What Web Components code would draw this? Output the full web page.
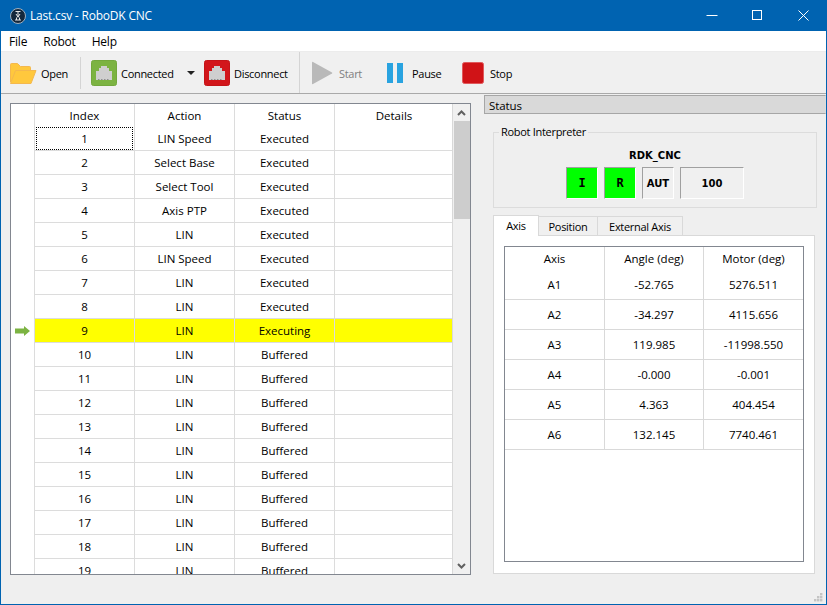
<!DOCTYPE html>
<html>
<head>
<meta charset="utf-8">
<title>Last.csv - RoboDK CNC</title>
<style>
  html, body { margin: 0; padding: 0; background: #efefef; }
  body { font: 11.5px "Open Sans", "Liberation Sans", sans-serif; color: #000; }
</style>
</head>
<body>
<cnc-window>
  <title-bar slot="title" label="Last.csv - RoboDK CNC"></title-bar>
  <menu-bar slot="menu"></menu-bar>
  <tool-bar slot="tools"></tool-bar>
  <program-table slot="left"></program-table>
  <status-dock slot="right"></status-dock>
</cnc-window>

<script>
class CncWindow extends HTMLElement {
  constructor() {
    super();
    this.attachShadow({ mode: 'open' });
    this.shadowRoot.innerHTML = `
      <style>
        :host {
          display: flex;
          flex-direction: column;
          box-sizing: border-box;
          width: 827px;
          height: 605px;
          border: 1px solid #0063b1;
          border-top: 0;
          background: #efefef;
          overflow: hidden;
          position: relative;
        }
        .main { flex: 1; display: flex; min-height: 0; }
        .grip { position: absolute; right: 3px; bottom: 2px; width: 9px; height: 9px; }
      </style>
      <slot name="title"></slot>
      <slot name="menu"></slot>
      <slot name="tools"></slot>
      <div class="main">
        <slot name="left"></slot>
        <slot name="right"></slot>
      </div>
      <svg class="grip" viewBox="0 0 9 9" fill="#c4c4c4">
        <rect x="6" y="0" width="2.4" height="2.4"/>
        <rect x="3" y="3" width="2.4" height="2.4"/><rect x="6" y="3" width="2.4" height="2.4"/>
        <rect x="0" y="6" width="2.4" height="2.4"/><rect x="3" y="6" width="2.4" height="2.4"/><rect x="6" y="6" width="2.4" height="2.4"/>
      </svg>
    `;
  }
}
customElements.define('cnc-window', CncWindow);

class TitleBar extends HTMLElement {
  constructor() {
    super();
    this.attachShadow({ mode: 'open' });
  }
  connectedCallback() {
    this.shadowRoot.innerHTML = `
      <style>
        :host {
          display: flex;
          align-items: center;
          height: 31px;
          margin: 0 -1px;
          padding-left: 10px;
          background: #0063b1;
          color: #fff;
          font-size: 12px;
          letter-spacing: -0.2px;
        }
        .logo { width: 16px; height: 16px; margin-right: 4px; flex: none; }
        .label { flex: 1; }
        .ctrl { display: block; flex: none; width: 46px; height: 31px; }
      </style>
      <svg class="logo" viewBox="0 0 16 16">
        <circle cx="8" cy="8" r="7.5" fill="#14283c" stroke="#9fb0bf" stroke-width="1"/>
        <path d="M5.500 3.500h5M8 3.500v6M6 6l2 3 2-3M5 12h6M6.500 9.500v2.500M9.500 9.500v2.500" stroke="#e6e6e6" stroke-width="1" fill="none"/>
      </svg>
      <span class="label">${this.getAttribute('label')}</span>
      <svg class="ctrl" viewBox="0 0 46 31"><path d="M17.500 15.500h11" stroke="#fff" fill="none"/></svg>
      <svg class="ctrl" viewBox="0 0 46 31"><rect x="17.500" y="10.500" width="9" height="9" stroke="#fff" fill="none"/></svg>
      <svg class="ctrl" viewBox="0 0 46 31"><path d="M17.500 10.500l10 10M27.500 10.500l-10 10" stroke="#fff" fill="none"/></svg>
    `;
  }
}
customElements.define('title-bar', TitleBar);

class MenuBar extends HTMLElement {
  constructor() {
    super();
    this.attachShadow({ mode: 'open' });
    this.shadowRoot.innerHTML = `
      <style>
        :host {
          display: flex;
          height: 20px;
          align-items: center;
          gap: 16px;
          padding-left: 8px;
          background: #fff;
          font-size: 12px;
          letter-spacing: -0.2px;
          border-bottom: 1px solid #ececec;
        }
      </style>
      <span>File</span><span>Robot</span><span>Help</span>
    `;
  }
}
customElements.define('menu-bar', MenuBar);

function plugIcon(fill, edge) {
  return `<svg width="26" height="26" viewBox="0 0 26 26">
      <rect x=".5" y=".5" width="25" height="25" rx="2" fill="${fill}" stroke="${edge}"/>
      <path d="M5 20V11H8V8H10V6H16V8H18V11H21V20Z" fill="#cfcfcf"/>
      <path d="M7 19.500h1.500M10 19.500h1.500M13 19.500h1.500M16 19.500h1.500" stroke="#8f8f8f" fill="none"/>
    </svg>`;
}

const ICONS = {
  open: `<svg width="28" height="24" viewBox="0 0 28 24">
      <path d="M1.500 21V3.500q0-1 1-1h6l3 3h9q1 0 1 1V9" fill="#ffc83d" stroke="#f4b84e"/>
      <path d="M1.500 22.500L6.500 9.500h20.500L22 22.500z" fill="#ffc83d" stroke="#f4b84e" stroke-linejoin="round"/>
    </svg>`,
  plugGreen: plugIcon('#7cb342', '#73a83d'),
  plugRed: plugIcon('#d2161b', '#c41418'),
  start: `<svg width="22" height="24" viewBox="0 0 22 24"><path d="M0 1.500v21q0 1 1 .5L20 12.500q.8-.5 0-1L1 1q-1-.5-1 .5z" fill="#b9b9b9"/></svg>`,
  pause: `<svg width="16" height="20" viewBox="0 0 16 20"><rect x="0" y="0" width="6" height="20" fill="#29a3e0"/><rect x="10" y="0" width="6" height="20" fill="#29a3e0"/></svg>`,
  stop: `<svg width="22" height="22" viewBox="0 0 22 22"><rect x=".5" y=".5" width="21" height="21" rx="2" fill="#d01317" stroke="#e0595c"/></svg>`
};

class ToolButton extends HTMLElement {
  constructor() {
    super();
    this.attachShadow({ mode: 'open' });
  }
  connectedCallback() {
    const disabled = this.hasAttribute('disabled');
    this.shadowRoot.innerHTML = `
      <style>
        :host {
          display: flex;
          flex: none;
          align-items: center;
          gap: var(--gap, 4px);
          font-size: 11px;
          letter-spacing: -0.3px;
          white-space: nowrap;
          color: ${disabled ? '#808080' : '#000'};
        }
        svg { display: block; flex: none; }
      </style>
      ${ICONS[this.getAttribute('icon')]}
      <span><slot></slot></span>
    `;
  }
}
customElements.define('tool-button', ToolButton);

class ToolBar extends HTMLElement {
  constructor() {
    super();
    this.attachShadow({ mode: 'open' });
    this.shadowRoot.innerHTML = `
      <style>
        :host {
          display: flex;
          align-items: center;
          box-sizing: border-box;
          height: 42px;
          padding: 1px 0 0 8px;
          background: #f0f0f0;
          border-bottom: 1px solid #a9a9a9;
        }
        .sep { width: 1px; background: #d4d4d4; flex: none; }
        .arrow { width: 0; height: 0; flex: none; border: 4px solid transparent; border-top: 4px solid #222; border-bottom: 0; }
      </style>
      <tool-button icon="open" style="width:57px">Open</tool-button>
      <div class="sep" style="height:32px;margin:-1px 10px 0 14px"></div>
      <tool-button icon="plugGreen" style="width:82px">Connected</tool-button>
      <div class="arrow" style="margin:0 9px 0 14px"></div>
      <tool-button icon="plugRed" style="width:83px">Disconnect</tool-button>
      <div class="sep" style="height:41px;margin:-1px 12px 0 12px"></div>
      <tool-button icon="start" style="--gap:5px;width:52px" disabled>Start</tool-button>
      <tool-button icon="pause" style="--gap:9px;width:54px;margin-left:23px">Pause</tool-button>
      <tool-button icon="stop" style="--gap:6px;margin-left:21px">Stop</tool-button>
    `;
  }
}
customElements.define('tool-bar', ToolBar);

class ProgramTable extends HTMLElement {
  constructor() {
    super();
    this.attachShadow({ mode: 'open' });
  }
  connectedCallback() {
    const actions = ['LIN Speed', 'Select Base', 'Select Tool', 'Axis PTP', 'LIN', 'LIN Speed'];
    let rows = '';
    for (let i = 1; i <= 19; i++) {
      const status = i < 9 ? 'Executed' : i === 9 ? 'Executing' : 'Buffered';
      const action = actions[i - 1] || 'LIN';
      rows += `
        <div class="row ${i === 9 ? 'current' : ''}">
          <div class="rh">${i === 9 ? '<svg width="15" height="10" viewBox="0 0 15 10"><path d="M0 2.500H9V0L15 5 9 10V7.500H0Z" fill="#7cb342"/></svg>' : ''}</div>
          <div class="c"><span class="${i === 1 ? 'focus' : ''}">${i}</span></div>
          <div class="c">${action}</div>
          <div class="c">${status}</div>
          <div class="c"></div>
        </div>`;
    }
    this.shadowRoot.innerHTML = `
      <style>
        :host {
          display: flex;
          box-sizing: border-box;
          flex: none;
          width: 461px;
          height: 472px;
          margin: 9px 13px 0 9px;
          border: 1px solid #828790;
          background: #fff;
          font-size: 11.5px;
        }
        .body { flex: none; width: 441px; height: 470px; overflow: hidden; border-right: 1px solid #d9d9d9; }
        .row { display: grid; grid-template-columns: 24px 100px 100px 100px 118px; height: 24px; }
        .head { height: 23px; }
        .rh { border-right: 1px solid #dcdcdc; box-sizing: border-box; display: flex; align-items: center; padding-left: 4px; }
        .c {
          box-sizing: border-box;
          display: flex;
          align-items: center;
          justify-content: center;
          border-right: 1px solid #dcdcdc;
          border-bottom: 1px solid #dcdcdc;
          position: relative;
        }
        .c:last-child { border-right: 0; }
        .head .c { border-bottom: 0; }
        .current .c { background: #ff0; }
        .focus::before {
          content: '';
          position: absolute;
          left: 1px; top: 0; right: 1px; bottom: 0;
          border: 1px dotted #000;
        }
        .scroll { flex: 1; display: flex; flex-direction: column; background: #f0f0f0; }
        .btn { height: 17px; display: flex; align-items: center; justify-content: center; flex: none; }
        .thumb { height: 98px; background: #cdcdcd; margin-left: 1px; flex: none; }
        .track { flex: 1; }
      </style>
      <div class="body">
        <div class="row head">
          <div class="rh"></div>
          <div class="c">Index</div><div class="c">Action</div><div class="c">Status</div><div class="c">Details</div>
        </div>
        ${rows}
      </div>
      <div class="scroll">
        <div class="btn"><svg width="9" height="6" viewBox="0 0 9 6"><path d="M1 5l3.500-3.500L8 5" fill="none" stroke="#606060" stroke-width="2"/></svg></div>
        <div class="thumb"></div>
        <div class="track"></div>
        <div class="btn"><svg width="9" height="6" viewBox="0 0 9 6"><path d="M1 1l3.500 3.500L8 1" fill="none" stroke="#606060" stroke-width="2"/></svg></div>
      </div>
    `;
  }
}
customElements.define('program-table', ProgramTable);

class StateBox extends HTMLElement {
  constructor() {
    super();
    this.attachShadow({ mode: 'open' });
    this.shadowRoot.innerHTML = `
      <style>
        :host {
          display: flex;
          align-items: center;
          justify-content: center;
          box-sizing: border-box;
          width: var(--w, 32px);
          height: 32px;
          border: 1px solid;
          border-color: #a0a0a0 #fff #fff #a0a0a0;
          background: var(--bg, #f0f0f0);
          font: bold 10px "DejaVu Sans", sans-serif;
          color: #000;
        }
      </style>
      <slot></slot>
    `;
  }
}
customElements.define('state-box', StateBox);

class AxisTable extends HTMLElement {
  constructor() {
    super();
    this.attachShadow({ mode: 'open' });
  }
  connectedCallback() {
    const data = [
      ['A1', '-52.765', '5276.511'],
      ['A2', '-34.297', '4115.656'],
      ['A3', '119.985', '-11998.550'],
      ['A4', '-0.000', '-0.001'],
      ['A5', '4.363', '404.454'],
      ['A6', '132.145', '7740.461']
    ];
    this.shadowRoot.innerHTML = `
      <style>
        :host {
          display: block;
          box-sizing: border-box;
          height: 316px;
          border: 1px solid #828790;
          background: #fff;
          font-size: 11.5px;
        }
        .row { display: grid; grid-template-columns: 100px 99px 99px; height: 30px; }
        .row.head { height: 23px; }
        .c {
          display: flex;
          align-items: center;
          justify-content: center;
          box-sizing: border-box;
          border-right: 1px solid #d9d9d9;
          border-bottom: 1px solid #d9d9d9;
        }
        .c:last-child { border-right: 0; }
        .head .c { border-bottom: 0; }
      </style>
      <div class="row head"><div class="c">Axis</div><div class="c">Angle (deg)</div><div class="c">Motor (deg)</div></div>
      ${data.map(r => `<div class="row">${r.map(v => `<div class="c">${v}</div>`).join('')}</div>`).join('')}
    `;
  }
}
customElements.define('axis-table', AxisTable);

class StatusDock extends HTMLElement {
  constructor() {
    super();
    this.attachShadow({ mode: 'open' });
    this.shadowRoot.innerHTML = `
      <style>
        :host {
          display: flex;
          flex-direction: column;
          flex: none;
          width: 342px;
          margin-top: 1px;
          font-size: 11.5px;
        }
        .title {
          box-sizing: border-box;
          height: 19px;
          display: flex;
          align-items: center;
          padding: 1px 0 0 4px;
          background: #d9d9d9;
          border: 1px solid #a6a6a6;
          border-right-color: #dcdcdc;
          letter-spacing: -0.1px;
        }
        fieldset {
          box-sizing: border-box;
          margin: 10px 9px 0;
          padding: 0;
          height: 84px;
          border: 1px solid #dcdcdc;
          display: flex;
          flex-direction: column;
          align-items: center;
          min-width: 0;
        }
        legend { padding: 0 2px; margin-left: 5px; font-size: 11px; letter-spacing: -0.3px; line-height: 16px; }
        .name { font: bold 10px "DejaVu Sans", sans-serif; margin: 9px 0 5px; line-height: 13px; }
        .boxes { display: flex; gap: 6px; }
        .tabs { display: flex; margin: 6px 9px 0; height: 21px; align-items: flex-end; font-size: 11px; letter-spacing: -0.3px; }
        .tab {
          box-sizing: border-box;
          height: 19px;
          display: flex;
          align-items: center;
          justify-content: center;
          background: #f0f0f0;
          border: 1px solid #d9d9d9;
          border-left: 0;
          border-bottom: 0;
        }
        .tab.on { height: 21px; width: 46px; background: #fff; border-left: 1px solid #d9d9d9; padding-bottom: 1px; margin-bottom: -1px; position: relative; z-index: 1; }
        .panel {
          box-sizing: border-box;
          margin: 0 11px 0 9px;
          height: 339px;
          padding: 10px;
          background: #fff;
          border: 1px solid #d9d9d9;
        }
      </style>
      <div class="title">Status</div>
      <fieldset>
        <legend>Robot Interpreter</legend>
        <div class="name">RDK_CNC</div>
        <div class="boxes">
          <state-box style="--bg:#00ff00;font-family:'DejaVu Sans Mono',monospace;font-size:12px">I</state-box>
          <state-box style="--bg:#00ff00;font-family:'DejaVu Sans Mono',monospace;font-size:12px">R</state-box>
          <state-box>AUT</state-box>
          <state-box style="--w:64px">100</state-box>
        </div>
      </fieldset>
      <div class="tabs">
        <div class="tab on">Axis</div>
        <div class="tab" style="width:59px">Position</div>
        <div class="tab" style="width:85px">External Axis</div>
      </div>
      <div class="panel"><axis-table></axis-table></div>
    `;
  }
}
customElements.define('status-dock', StatusDock);
</script>
</body>
</html>
